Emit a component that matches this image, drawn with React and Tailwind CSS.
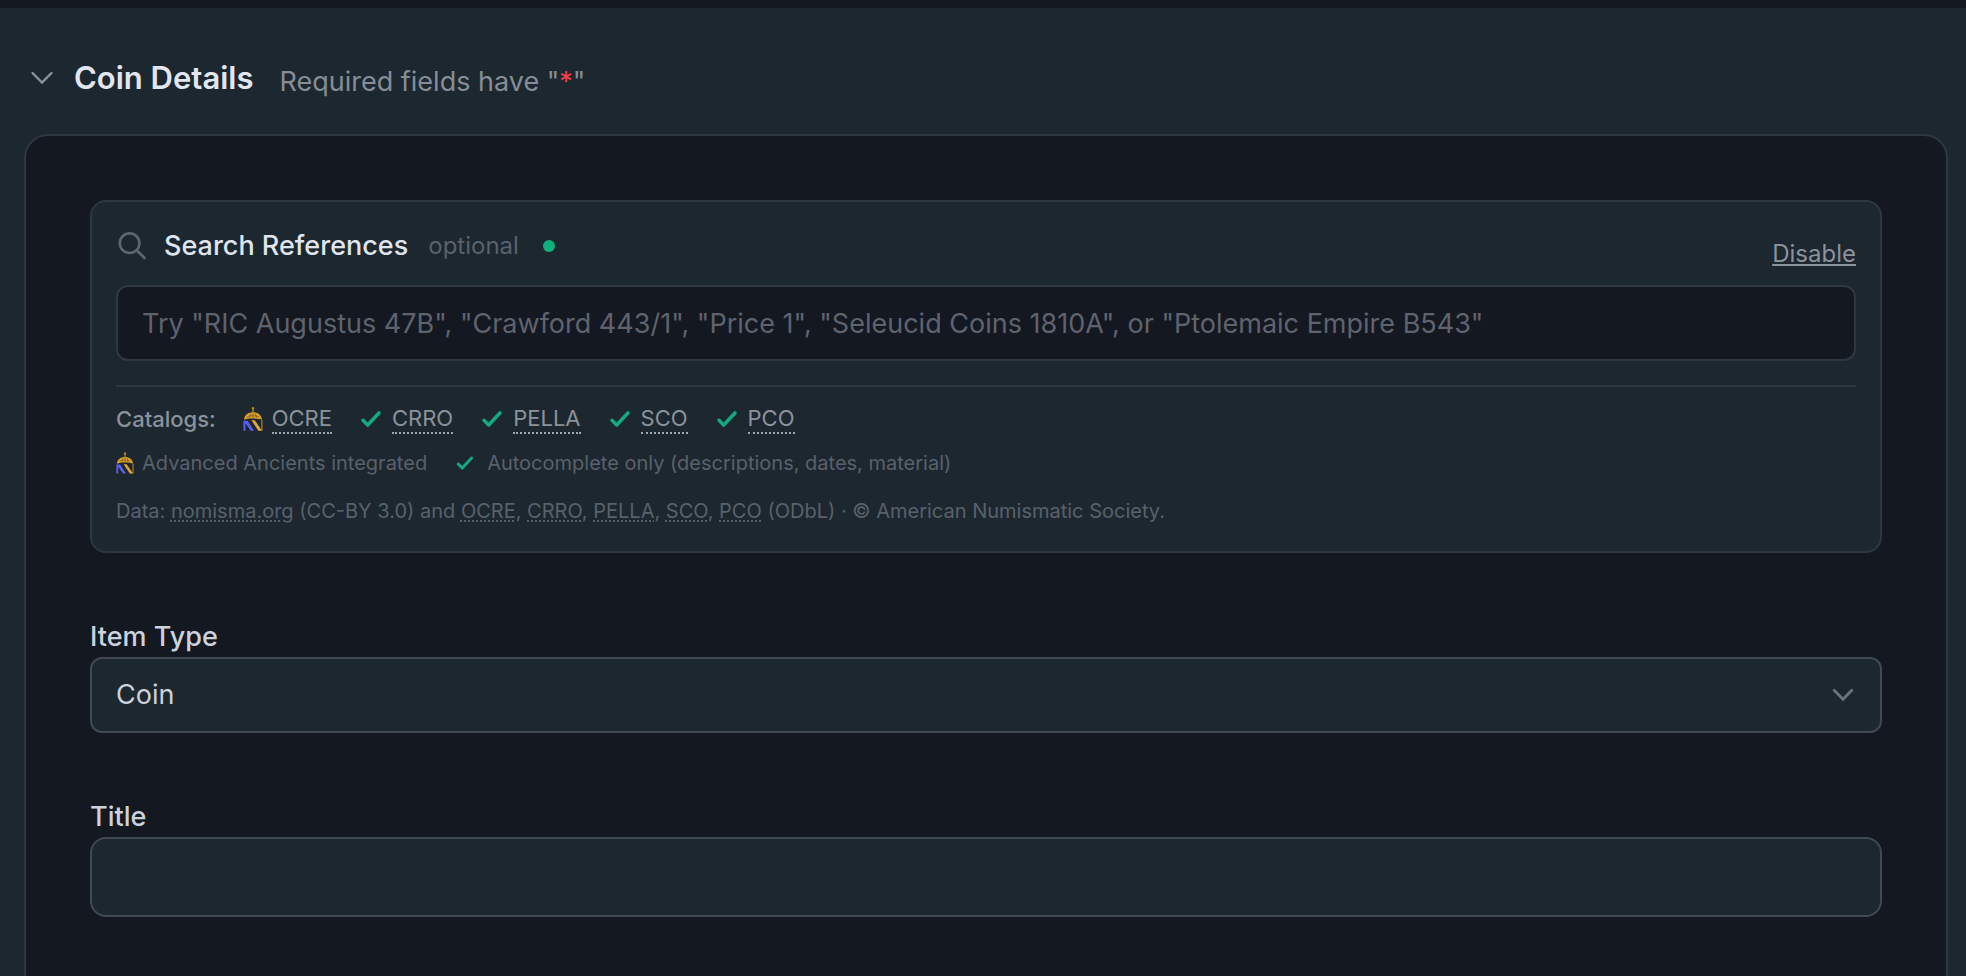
import React from "react";

const CATALOGS = ["OCRE", "CRRO", "PELLA", "SCO", "PCO"];

function HelmetMark({ className }) {
  return (
    <svg viewBox="0 0 20 24" className={className} aria-hidden="true">
      <circle cx="10" cy="1.400" r="1.300" fill="#b5822c" />
      <path d="M10 1v5" stroke="#b5822c" strokeWidth="1.300" />
      <path d="M1 12.800C1.500 8 5 5.300 10 5.300S18.500 8 19 12.800c-2-0.900-5-1.400-9-1.400S3 11.900 1 12.800z" fill="#d99e2b" />
      <path d="M4 9.800c4-1.500 8-1.500 12 0M7.500 6.500l-1 4.500M10 6v5M12.500 6.500l1 4.500" stroke="#6b5128" strokeWidth="0.600" fill="none" />
      <path d="M0.400 13.800h4.200l6.400 10H7.800L2.400 16.200v7.600h-2z" fill="#5a5ff0" />
      <path d="M8.400 13.300h3.400l7.200 10.500h-3.600z" fill="#e0a63a" />
      <path d="M18.900 13v10.800" stroke="#b5822c" strokeWidth="1.200" />
    </svg>
  );
}

function CheckMark({ className }) {
  return (
    <svg viewBox="0 0 24 24" className={className} aria-hidden="true">
      <path d="M4 13.300l4.700 4.700L20 6" fill="none" stroke="#16a97e" strokeWidth="3.600" strokeLinecap="round" strokeLinejoin="round" />
    </svg>
  );
}

function Chevron({ className, weight }) {
  return (
    <svg viewBox="0 0 28 28" className={className} aria-hidden="true">
      <path d="M4.500 9L14 18.500 23.500 9" fill="none" stroke="currentColor" strokeWidth={weight} strokeLinecap="round" />
    </svg>
  );
}

function SearchIcon({ className }) {
  return (
    <svg viewBox="0 0 32 32" className={className} aria-hidden="true">
      <circle cx="13.600" cy="13.200" r="9.800" fill="none" stroke="currentColor" strokeWidth="2.600" />
      <path d="M20.800 20.400l7.700 7.500" stroke="currentColor" strokeWidth="2.800" strokeLinecap="round" />
    </svg>
  );
}

function SourceLink({ children }) {
  return (
    <a href="#" className="underline decoration-dotted decoration-2 underline-offset-2">
      {children}
    </a>
  );
}

export default function App() {
  return (
    <div className="h-screen overflow-hidden border-t-8 border-[#141821] bg-[#1d272f] font-['Inter',sans-serif] text-[#ccd2dc]">
      <header className="flex items-center gap-[18px] px-7 pt-[46px]">
        <button type="button" aria-label="Collapse coin details" className="text-[#8b929c]">
          <Chevron className="size-7" weight="2.400" />
        </button>
        <h2 className="text-[31px] leading-10 font-semibold text-[#e2e6f0]">Coin Details</h2>
        <p className="ml-2 pt-2 text-[27px] leading-10 text-[#868d96]">
          Required fields have "<span className="text-[#f43f4e]">*</span>"
        </p>
      </header>

      <main className="mt-8 mr-[18px] ml-6 rounded-t-3xl border-2 border-[#2f3741] bg-[#141821] px-16 pt-16 pb-24">
        <section className="rounded-2xl border-2 border-[#2f3741] bg-[#1d272f] p-6">
          <div className="flex h-[59px] items-start justify-between">
            <label htmlFor="search" className="flex items-center text-[27px] leading-10">
              <SearchIcon className="mr-4 size-8 text-[#5d656f]" />
              <span className="font-medium text-[#dfe4ee]">Search References</span>
              <span className="ml-5 text-2xl text-[#59616b]">optional</span>
              <span className="ml-6 size-3 rounded-full bg-[#10b07c]" />
            </label>
            <button type="button" className="mt-3 text-2xl leading-8 text-[#8b929c] underline decoration-2 underline-offset-2">
              Disable
            </button>
          </div>
          <input
            id="search"
            type="text"
            placeholder={'Try "RIC Augustus 47B", "Crawford 443/1", "Price 1", "Seleucid Coins 1810A", or "Ptolemaic Empire B543"'}
            className="block h-[76px] w-full rounded-xl border-2 border-[#2f3741] bg-[#141821] px-6 text-[27px] placeholder:text-[#5f636e]"
          />
          <div className="mt-6 border-t-2 border-[#2f3741] pt-4">
            <div className="flex items-center gap-[27px] text-[22px] leading-8 text-[#8b929c]">
              <span className="font-medium">Catalogs:</span>
              {CATALOGS.map((name, i) => (
                <span key={name} className="flex items-center gap-[9px]">
                  {i === 0 ? <HelmetMark className="h-6 w-5" /> : <CheckMark className="size-6" />}
                  <a href="#" className="border-b-2 border-dotted border-[#a0a6af] leading-7">
                    {name}
                  </a>
                </span>
              ))}
            </div>
            <div className="mt-3 flex items-center gap-7 text-xl leading-8 text-[#59616b]">
              <span className="flex items-center gap-2">
                <HelmetMark className="h-[22px] w-[18px]" />
                Advanced Ancients integrated
              </span>
              <span className="flex items-center gap-3">
                <CheckMark className="size-5" />
                Autocomplete only (descriptions, dates, material)
              </span>
            </div>
            <p className="mt-4 text-xl leading-8 text-[#59616b]">
              Data: <SourceLink>nomisma.org</SourceLink> (CC-BY 3.0) and{" "}
              {CATALOGS.map((name, i) => (
                <React.Fragment key={name}>
                  <SourceLink>{name}</SourceLink>
                  {i < CATALOGS.length - 1 ? ", " : " "}
                </React.Fragment>
              ))}
              (ODbL) · © American Numismatic Society.
            </p>
          </div>
        </section>

        <div className="mt-16">
          <label htmlFor="item-type" className="block text-[27px] leading-10 font-medium">
            Item Type
          </label>
          <div className="grid items-center">
            <select
              id="item-type"
              className="col-start-1 row-start-1 h-[76px] w-full appearance-none rounded-xl border-2 border-[#414954] bg-[#1d272f] px-6 text-[27px]"
            >
              <option>Coin</option>
            </select>
            <Chevron className="pointer-events-none col-start-1 row-start-1 mr-[26px] size-[26px] justify-self-end text-[#6b737d]" weight="3" />
          </div>
        </div>

        <div className="mt-16">
          <label htmlFor="title" className="block text-[27px] leading-10 font-medium">
            Title
          </label>
          <input
            id="title"
            type="text"
            className="block h-20 w-full rounded-2xl border-2 border-[#414954] bg-[#1d272f] px-6 text-[27px]"
          />
        </div>
      </main>
    </div>
  );
}
